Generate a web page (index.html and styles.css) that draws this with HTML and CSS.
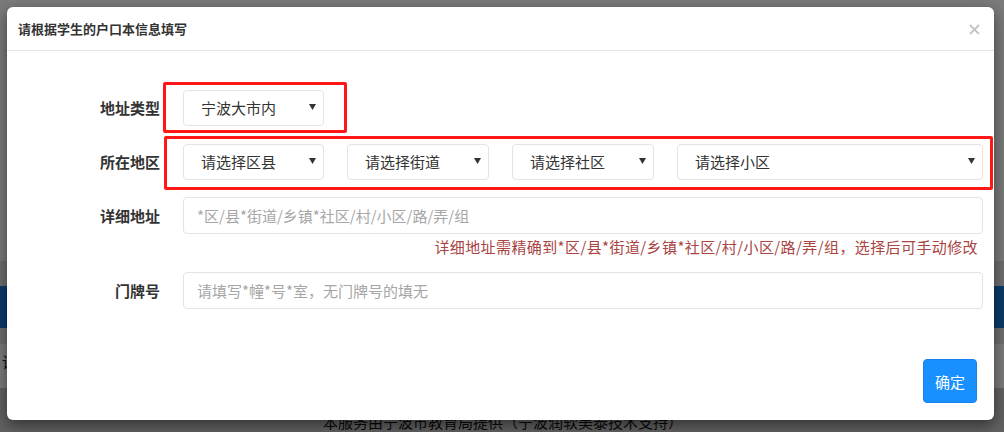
FILE: index.html
```html
<!DOCTYPE html>
<html lang="zh-CN">
<head>
<meta charset="utf-8">
<title>户口本信息</title>
<link rel="stylesheet" href="styles.css">
</head>
<body>
<div class="page">
  <div class="page-top"></div>
  <div class="page-nav"></div>
  <div class="page-banner"></div>
  <div class="page-gap"></div>
  <div class="page-row">请选择</div>
  <div class="page-footer">本服务由宁波市教育局提供（宁波润软美泰技术支持）</div>
</div>
<div class="backdrop"></div>
<div class="modal">
  <div class="modal-header">
    <h4 class="modal-title">请根据学生的户口本信息填写</h4>
    <span class="close"><svg width="11" height="11" viewBox="0 0 11 11"><path d="M1 1L10 10M10 1L1 10" stroke="#c4c4c4" stroke-width="1.8" fill="none"/></svg></span>
  </div>
  <div class="modal-body">
    <div class="form-row row-type">
      <label class="label">地址类型</label>
      <div class="field">
        <div class="mark mark-type">
          <div class="select w141"><span>宁波大市内</span><svg class="caret" width="7" height="6" viewBox="0 0 7 6"><path d="M0 0H7L3.5 6Z" fill="#333"/></svg></div>
        </div>
      </div>
    </div>
    <div class="form-row row-area">
      <label class="label">所在地区</label>
      <div class="field">
        <div class="mark mark-area">
          <div class="select w141"><span>请选择区县</span><svg class="caret" width="7" height="6" viewBox="0 0 7 6"><path d="M0 0H7L3.5 6Z" fill="#333"/></svg></div>
          <div class="select w142"><span>请选择街道</span><svg class="caret" width="7" height="6" viewBox="0 0 7 6"><path d="M0 0H7L3.5 6Z" fill="#333"/></svg></div>
          <div class="select w142"><span>请选择社区</span><svg class="caret" width="7" height="6" viewBox="0 0 7 6"><path d="M0 0H7L3.5 6Z" fill="#333"/></svg></div>
          <div class="select grow"><span>请选择小区</span><svg class="caret" width="7" height="6" viewBox="0 0 7 6"><path d="M0 0H7L3.5 6Z" fill="#333"/></svg></div>
        </div>
      </div>
    </div>
    <div class="form-row row-detail">
      <label class="label">详细地址</label>
      <div class="field">
        <input class="input" type="text" placeholder="*区/县*街道/乡镇*社区/村/小区/路/弄/组">
      </div>
    </div>
    <div class="hint">详细地址需精确到*区/县*街道/乡镇*社区/村/小区/路/弄/组，选择后可手动修改</div>
    <div class="form-row row-door">
      <label class="label">门牌号</label>
      <div class="field">
        <input class="input" type="text" placeholder="请填写*幢*号*室，无门牌号的填无">
      </div>
    </div>
  </div>
  <div class="modal-footer">
    <button class="btn-primary" type="button">确定</button>
  </div>
</div>
</body>
</html>
```
FILE: styles.css
```css
* { box-sizing: border-box; }
html, body { margin: 0; padding: 0; }
body {
  width: 1004px;
  height: 432px;
  overflow: hidden;
  position: relative;
  font-family: "Noto Sans CJK SC", "Microsoft YaHei", sans-serif;
  font-size: 15px;
  color: #333;
  background: #f4f4f4;
}
.page { display: flex; flex-direction: column; height: 432px; }
.page-top { height: 262px; background: #f6f6f6; }
.page-nav { height: 25px; background: #dedede; }
.page-banner { height: 43px; background: #1677d6; }
.page-gap { height: 16px; background: #dedede; }
.page-row { height: 44px; background: #f8f8f8; padding: 8px 0 0 2px; line-height: 20px; color: #222; }
.page-footer { flex: 1; background: #c4c4c4; text-align: center; padding-top: 24px; line-height: 20px; color: #111; padding-left: 2px; }

.backdrop {
  position: absolute;
  inset: 0;
  background: rgba(0, 0, 0, 0.5);
}

.modal {
  position: absolute;
  left: 7px;
  top: 7px;
  width: 987px;
  background: #fff;
  border-radius: 6px;
  box-shadow: 0 5px 15px rgba(0, 0, 0, 0.5);
}
.modal-header {
  height: 44px;
  border-bottom: 1px solid #e5e5e5;
  display: flex;
  align-items: center;
  justify-content: space-between;
  padding: 0 14px 0 11px;
}
.modal-title {
  margin: 0;
  font-size: 13px;
  font-weight: bold;
  color: #333;
  line-height: 18px;
}
.close { display: flex; width: 11px; height: 11px; margin-top: 1px; }

.modal-body { padding: 39px 11px 0 0; }
.form-row {
  display: grid;
  grid-template-columns: 153px 800px;
  column-gap: 23px;
  align-items: center;
}
.row-type { margin-bottom: 18px; }
.row-area { margin-bottom: 17px; }
.row-door { margin-top: 15px; }
.label {
  text-align: right;
  font-weight: bold;
  color: #333;
  line-height: 20px;
}
.field { display: flex; }
.mark { position: relative; display: flex; gap: 23px; }
.mark-area { flex: 1; }
.mark::after {
  content: "";
  position: absolute;
  border: 3px solid #ff1616;
  pointer-events: none;
}
.mark-type::after { top: -8px; bottom: -7px; left: -20px; right: -23px; border-radius: 2px; }
.mark-area::after { top: -8px; bottom: -10px; left: -19px; right: -10px; border-radius: 2px; }

.select {
  height: 36px;
  border: 1px solid #e3e3e3;
  border-radius: 4px;
  background: #fff;
  display: flex;
  align-items: center;
  justify-content: space-between;
  padding: 0 7px 0 17px;
  color: #333;
  line-height: 20px;
}
.w141 { width: 141px; }
.w142 { width: 142px; }
.grow { flex: 1; }
.caret { margin-top: -3px; }

.input {
  width: 800px;
  height: 37px;
  border: 1px solid #e3e3e3;
  border-radius: 4px;
  padding: 0 13px;
  font: inherit;
  color: #333;
  outline: none;
}
.input::placeholder { color: #a6a6a6; }

.hint {
  margin-top: 3px;
  padding-right: 5px;
  text-align: right;
  line-height: 20px;
  letter-spacing: 0.4px;
  color: #a94442;
}

.modal-footer {
  display: flex;
  justify-content: flex-end;
  padding: 50px 17px 17px 0;
}
.btn-primary {
  width: 54px;
  height: 44px;
  border: 1px solid #1683f0;
  border-radius: 4px;
  background: #1890ff;
  color: #fff;
  font: inherit;
  font-size: 15px;
  padding: 0;
}
```
